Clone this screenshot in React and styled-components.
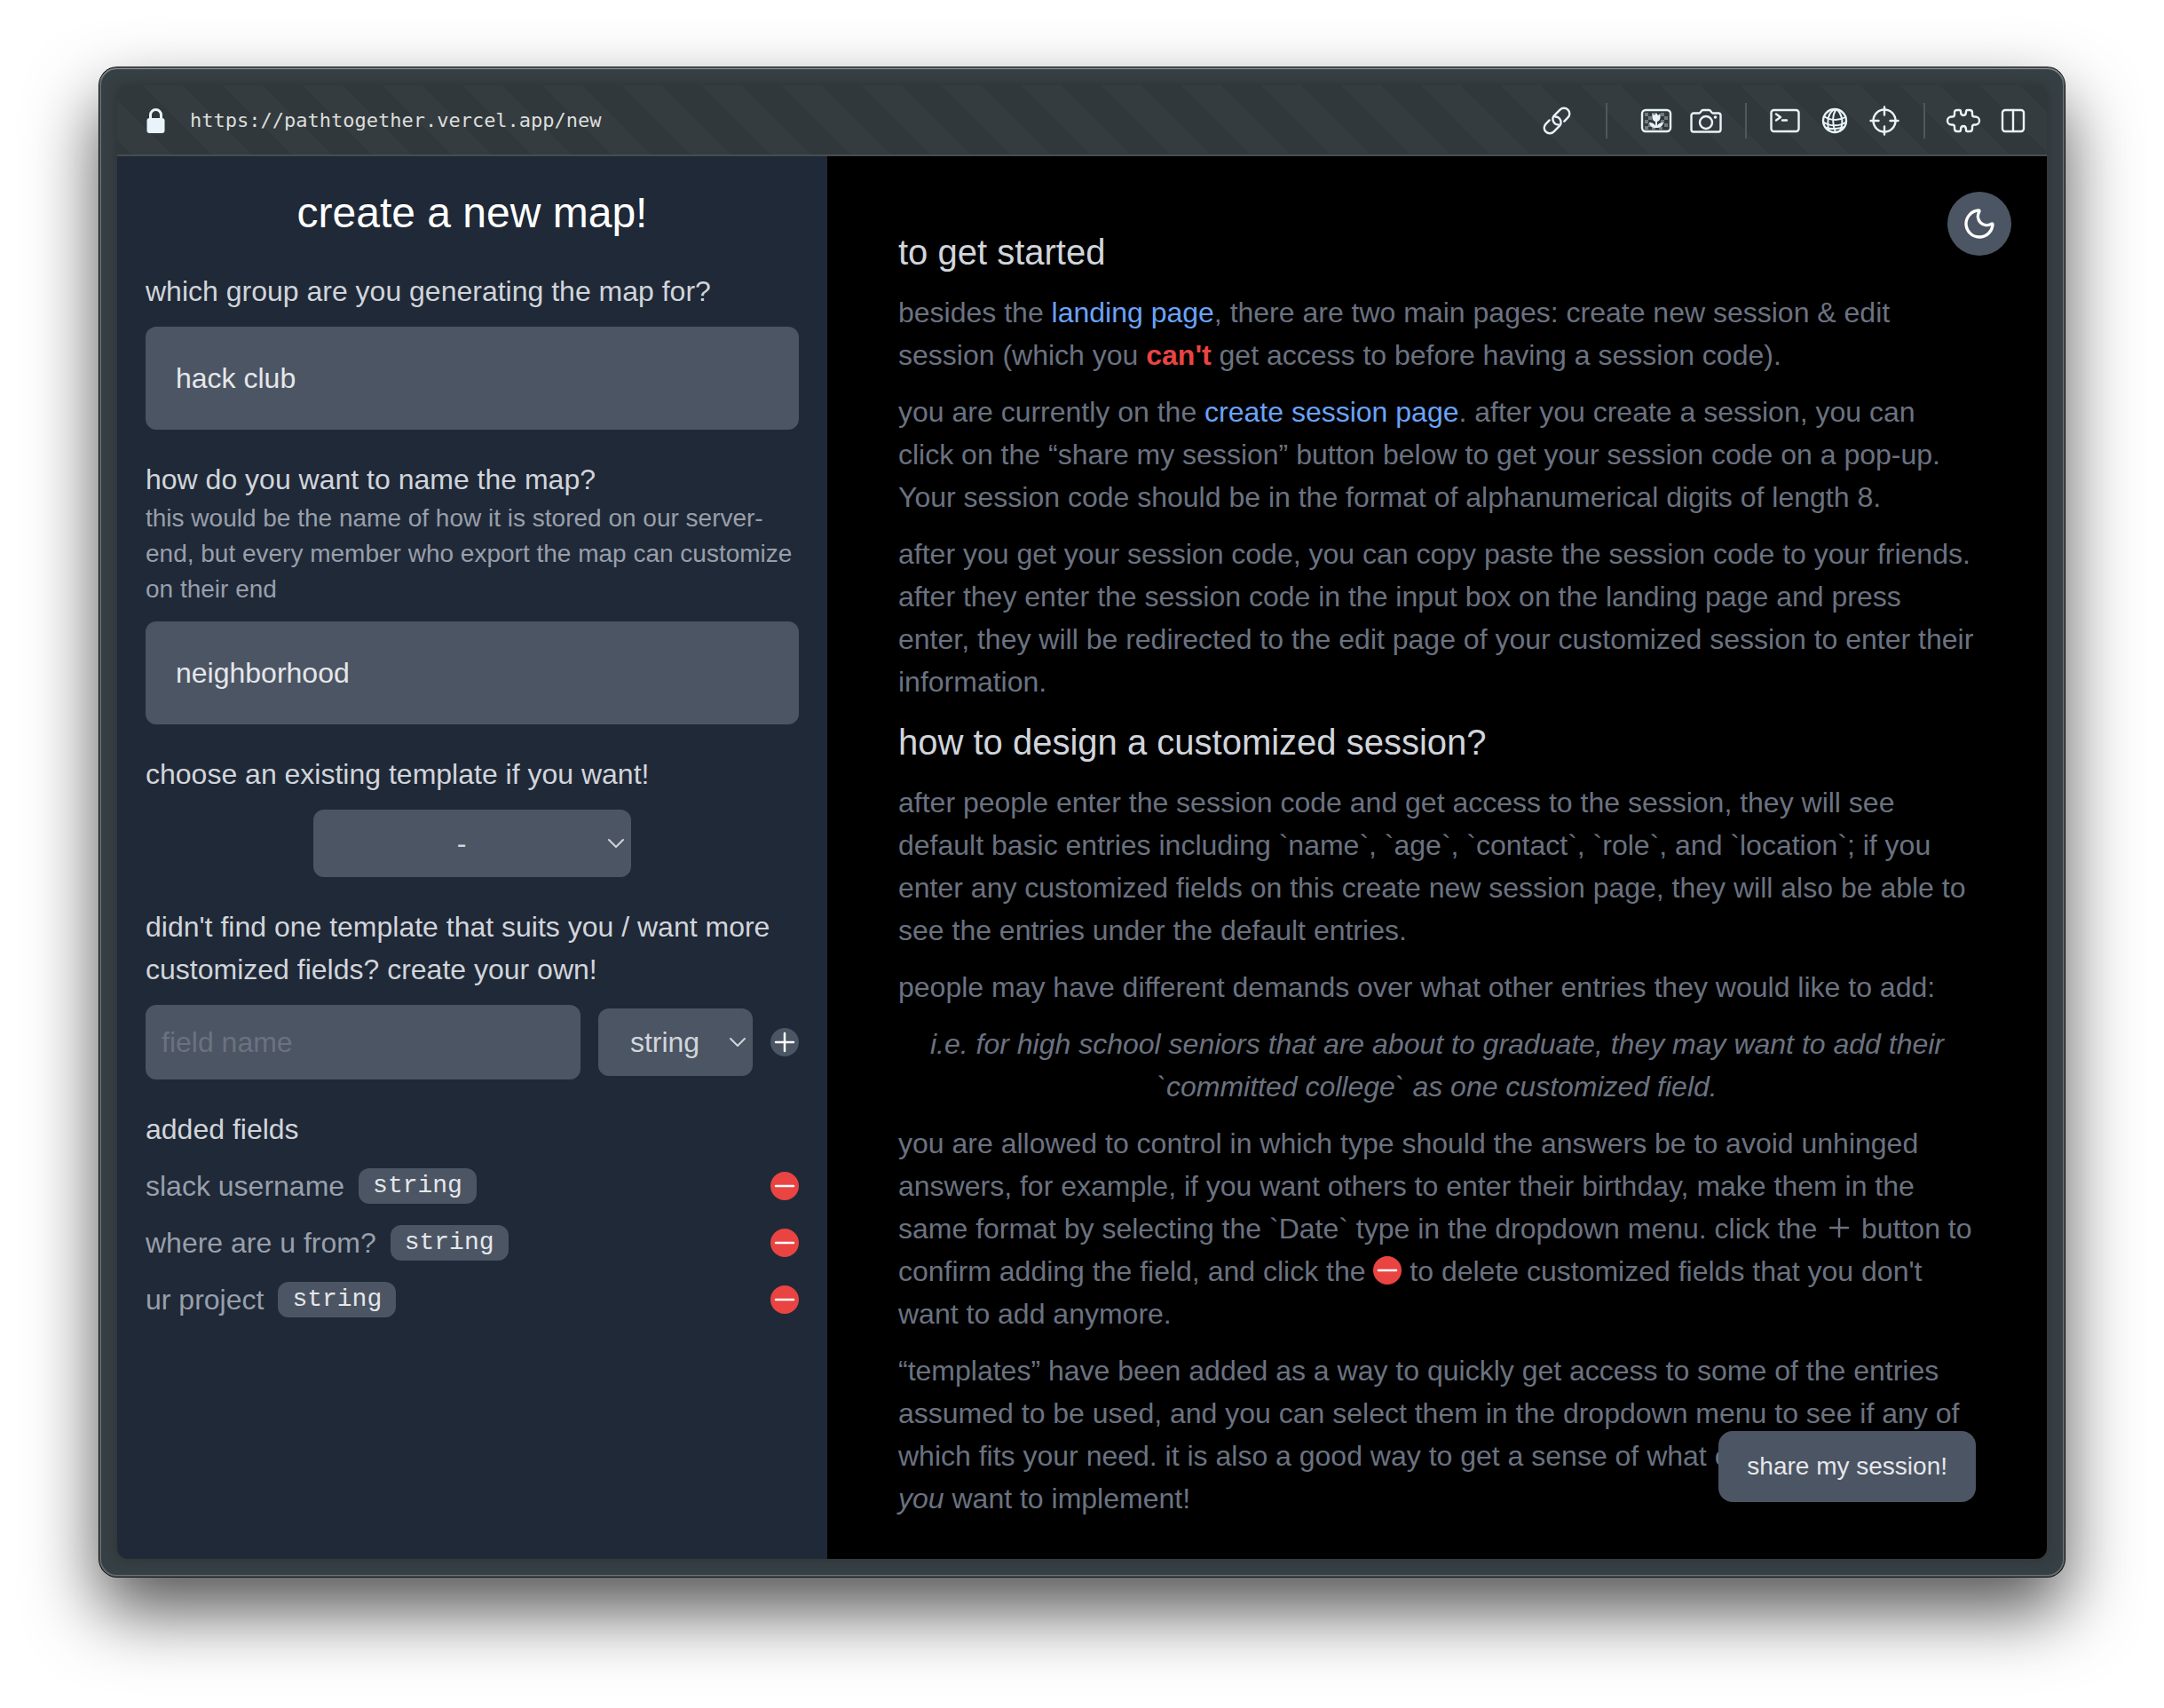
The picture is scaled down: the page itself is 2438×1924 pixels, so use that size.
import React from 'react';
import styled, { createGlobalStyle, css } from 'styled-components';
import { Moon } from 'lucide-react';

const GlobalStyle = createGlobalStyle`
  *, *::before, *::after { box-sizing: border-box; }
  body {
    margin: 0;
    background: #ffffff;
    font-family: 'Liberation Sans', Arial, sans-serif;
    font-size: 32px;
    line-height: 48px;
  }
  h1, h2, p, ul { margin: 0; padding: 0; font-weight: 400; }
  ul { list-style: none; }
  button, input, select { font: inherit; color: inherit; margin: 0; }
  button { border: 0; padding: 0; background: none; cursor: pointer; }
`;

const Page = styled.div`
  padding: 76px 112px 148px;
`;

const BrowserWindow = styled.div`
  padding: 20px;
  border-radius: 20px;
  background: #363f44;
  box-shadow:
    inset 0 2px 0 rgba(255, 255, 255, 0.16),
    inset 0 0 0 2px rgba(160, 176, 172, 0.4),
    0 0 0 1px #000000,
    0 38px 80px rgba(0, 0, 0, 0.68);
`;

const Viewport = styled.div`
  border-radius: 12px;
  overflow: hidden;
  box-shadow: 0 0 12px rgba(40, 44, 40, 0.6);
`;

const AddressBar = styled.header`
  display: flex;
  align-items: center;
  height: 80px;
  padding: 0 18px 0 32px;
  color: #e8f4fa;
  background-color: #31383b;
  background-image: linear-gradient(
    45deg,
    #353c3f 25%,
    transparent 25%,
    transparent 50%,
    #353c3f 50%,
    #353c3f 75%,
    transparent 75%
  );
  background-size: 90px 90px;
  background-position: 29px 0;
  box-shadow: inset 0 -2px 0 #454e50;
`;

const Address = styled.span`
  flex: 1;
  margin-left: 28px;
  font-family: 'DejaVu Sans Mono', 'Liberation Mono', monospace;
  font-size: 22px;
  line-height: 32px;
  color: #dcdede;
`;

const Tools = styled.div`
  display: flex;
  align-items: center;
  gap: 16px;
`;

const ToolButton = styled.button`
  display: flex;
  align-items: center;
  justify-content: center;
  width: 40px;
  height: 40px;
  color: inherit;
`;

const Separator = styled.span`
  width: 2px;
  height: 40px;
  margin: ${({ $wide }) => ($wide ? '0 19px' : '0 7px 0 8px')};
  background: #50585b;
`;

const Line = styled.svg`
  display: block;
  flex: none;
  fill: none;
  stroke: currentColor;
  stroke-width: ${({ $weight = 2.4 }) => $weight};
  stroke-linecap: round;
  stroke-linejoin: round;
`;

const Content = styled.div`
  display: grid;
  grid-template-columns: minmax(0, 800px) minmax(0, 1fr);
`;

const Sidebar = styled.form`
  display: flex;
  flex-direction: column;
  gap: 32px;
  padding: 32px;
  background: #202937;
  color: #d1d5db;
`;

const Title = styled.h1`
  font-size: 48px;
  line-height: 64px;
  text-align: center;
  color: #ffffff;
`;

const FieldGroup = styled.div`
  display: flex;
  flex-direction: column;
  gap: 16px;
`;

const Label = styled.label`
  display: block;
`;

const Hint = styled.p`
  font-size: 28px;
  line-height: 40px;
  color: #989fab;
`;

const surface = css`
  border: 2px solid #4c5563;
  border-radius: 12px;
  background: #4c5563;
`;

const TextInput = styled.input`
  ${surface}
  width: 100%;
  min-width: 0;
  padding: ${({ $compact }) => ($compact ? '16px' : '32px')};
  height: ${({ $compact }) => ($compact ? '84px' : '116px')};
  color: #e5e7eb;
  &::placeholder { color: #6b7280; opacity: 1; }
`;

const SelectBox = styled.div`
  display: grid;
  align-items: center;
  flex: none;
  width: ${({ $wide }) => ($wide ? '358px' : '174px')};
  align-self: center;
  color: #d1d5db;
  > * { grid-area: 1 / 1; }
  > svg { justify-self: end; margin-right: 7px; pointer-events: none; }
`;

const Select = styled.select`
  ${surface}
  appearance: none;
  width: 100%;
  height: 76px;
  padding: 0 56px 0 32px;
  text-align: center;
`;

const FieldRow = styled.div`
  display: flex;
  align-items: center;
  gap: 20px;
`;

const RoundButton = styled.button`
  flex: none;
  width: 32px;
  height: 32px;
  border-radius: 50%;
  color: #ffffff;
  background: ${({ $danger }) => ($danger ? '#e94442' : '#4c5563')};
`;

const AddedItem = styled.li`
  display: flex;
  align-items: center;
  gap: 16px;
  color: #989fab;
  ${RoundButton} { margin-left: auto; }
`;

const TypeBadge = styled.code`
  padding: 0 16px;
  border-radius: 12px;
  background: #4c5563;
  color: #e5e7eb;
  font-family: 'Liberation Mono', 'Courier New', monospace;
  font-size: 28px;
  line-height: 40px;
`;

const Guide = styled.main`
  position: relative;
  display: flex;
  flex-direction: column;
  gap: 16px;
  padding: 80px 80px 44px;
  background: #000000;
  color: #6b7280;
`;

const GuideHeading = styled.h2`
  font-size: 40px;
  line-height: 56px;
  color: #d1d5db;
`;

const Example = styled.p`
  font-style: italic;
  text-align: center;
`;

const GuideLink = styled.a`
  color: #6aa3f9;
  text-decoration: none;
`;

const Warning = styled.strong`
  color: #e94442;
`;

const InlineIcon = styled.span`
  display: inline-block;
  width: 32px;
  height: 32px;
  vertical-align: -4px;
  border-radius: 50%;
  color: ${({ $danger }) => ($danger ? '#ffffff' : 'inherit')};
  background: ${({ $danger }) => ($danger ? '#e94442' : 'none')};
`;

const ThemeToggle = styled.button`
  position: absolute;
  top: 40px;
  right: 40px;
  display: flex;
  align-items: center;
  justify-content: center;
  width: 72px;
  height: 72px;
  border-radius: 50%;
  background: #4c5563;
  color: #ffffff;
`;

const ShareButton = styled.button`
  position: absolute;
  right: 80px;
  bottom: 64px;
  padding: 20px 32px;
  border-radius: 16px;
  background: #4c5563;
  color: #e5e7eb;
  font-size: 28px;
  line-height: 40px;
`;

const LockIcon = () => (
  <svg width="22" height="30" viewBox="0 0 22 30" fill="none" aria-hidden="true">
    <rect x="1.500" y="12" width="20" height="17" rx="3" fill="currentColor" />
    <path d="M5.500 13V8.500a6 6 0 0 1 12 0V13" stroke="currentColor" strokeWidth="3" />
  </svg>
);

const LinkIcon = () => (
  <Line width="38" height="38" viewBox="-19 -19 38 38" aria-hidden="true">
    <g transform="rotate(-45)">
      <path d="M5.500 6.300H11.300A6.300 6.300 0 0 0 11.300 -6.300H2.500A6.300 6.300 0 0 0 -2 4.400" />
      <path d="M-5.500 -6.300H-11.300A6.300 6.300 0 0 0 -11.300 6.300H-2.500A6.300 6.300 0 0 0 2 -4.400" />
    </g>
  </Line>
);

const PictureIcon = () => (
  <Line width="36" height="28" viewBox="0 0 36 28" aria-hidden="true">
    <g stroke="none" fill="currentColor" opacity="0.35">
      <path d="M5 5h4v4H5zM13 5h4v4h-4zM23 5h4v4h-4zM9 9h4v4H9zM27 9h4v4h-4zM5 13h4v4H5zM23 13h4v4h-4zM9 17h4v4H9zM27 17h4v4h-4zM5 20h4v4H5zM13 21h4v3h-4zM21 21h4v3h-4z" />
    </g>
    <rect x="2" y="2" width="32" height="24" rx="4" />
    <g stroke="none" fill="currentColor">
      <path d="M13.500 6l2.500 2 2-3 2 3 2.500-2v4.500a4.500 4.500 0 0 1-9 0z" />
      <path d="M17 13h2v9h-2z" />
      <path d="M18 22c-5 0-7-2-8-6 4 0 7 2 8 6zM18 22c5 0 7-2 8-6-4 0-7 2-8 6z" />
    </g>
  </Line>
);

const CameraIcon = () => (
  <Line width="36" height="28" viewBox="0 0 36 28" aria-hidden="true">
    <path d="M4 5.500h6.500c1.500 0 2-3.500 4-3.500h7c2 0 2.500 3.500 4 3.500H32a2.500 2.500 0 0 1 2.500 2.500v16a2.500 2.500 0 0 1-2.500 2.500H4A2.500 2.500 0 0 1 1.500 24V8A2.500 2.500 0 0 1 4 5.500z" />
    <circle cx="18" cy="16" r="7" />
    <circle cx="28.500" cy="10" r="1.800" fill="currentColor" stroke="none" />
  </Line>
);

const TerminalIcon = () => (
  <Line width="34" height="28" viewBox="0 0 34 28" aria-hidden="true">
    <rect x="1.500" y="2" width="31" height="24" rx="3" />
    <path d="M7 6.500l5 3.500-5 3.500M14 13.500h5" />
  </Line>
);

const GlobeIcon = () => (
  <Line width="30" height="30" viewBox="0 0 30 30" aria-hidden="true">
    <circle cx="15" cy="15" r="13" />
    <g strokeWidth="2">
      <path d="M3 10c7 5 17 5 24 1M2 16.500c8 5 18 5 26 0M6 23c5 2 14 1 20-1" />
      <path d="M15 2C9 5 6 12 8 25M17 2c-5 6-5 17-1 26M18 2.500c6 7 7 15 3 24" />
    </g>
  </Line>
);

const CrosshairIcon = () => (
  <Line width="34" height="34" viewBox="0 0 34 34" aria-hidden="true">
    <circle cx="17" cy="17" r="12.500" />
    <path d="M17 1.500v9M17 23.500v9M1.500 17h9M23.500 17h9" />
  </Line>
);

const PuzzleIcon = () => (
  <Line width="40" height="28" viewBox="-1 -1 40 28" aria-hidden="true">
    <path d="M12 1h2.500q1.500 0 1.500 2q0 4 3 4q3 0 3-4q0-2 1.500-2h2.500q3 0 3 3v2q0 2.500 2.500 2.500h1a4.500 4.500 0 0 1 0 9h-1q-2.500 0-2.500 2.500v2q0 3-3 3h-2.500q-1.500 0-1.500-2q0-4-3-4q-3 0-3 4q0 2-1.500 2H12q-3 0-3-3v-2q0-2.500-2.500-2.500h-1a4.500 4.500 0 0 1 0-9h1q2.500 0 2.500-2.500V4q0-3 3-3z" />
  </Line>
);

const PanelsIcon = () => (
  <Line width="28" height="28" viewBox="0 0 28 28" aria-hidden="true">
    <rect x="2" y="2" width="24" height="24" rx="3" />
    <path d="M14 2v24" />
  </Line>
);

const ChevronIcon = () => (
  <Line $weight={2} width="20" height="12" viewBox="0 0 20 12" aria-hidden="true">
    <path d="M2 2l8 8 8-8" />
  </Line>
);

const PlusIcon = () => (
  <Line $weight={2.5} width="32" height="32" viewBox="0 0 32 32" aria-hidden="true">
    <path d="M16 6v20M6 16h20" />
  </Line>
);

const MinusIcon = () => (
  <Line $weight={2.5} width="32" height="32" viewBox="0 0 32 32" aria-hidden="true">
    <path d="M6 16h20" />
  </Line>
);

const addedFields = [
  { name: 'slack username', type: 'string' },
  { name: 'where are u from?', type: 'string' },
  { name: 'ur project', type: 'string' },
];

function Toolbar() {
  return (
    <AddressBar>
      <LockIcon />
      <Address>https://pathtogether.vercel.app/new</Address>
      <Tools>
        <ToolButton aria-label="Copy link"><LinkIcon /></ToolButton>
        <Separator $wide />
        <ToolButton aria-label="Images"><PictureIcon /></ToolButton>
        <ToolButton aria-label="Capture"><CameraIcon /></ToolButton>
        <Separator />
        <ToolButton aria-label="Console"><TerminalIcon /></ToolButton>
        <ToolButton aria-label="Network"><GlobeIcon /></ToolButton>
        <ToolButton aria-label="Inspect"><CrosshairIcon /></ToolButton>
        <Separator />
        <ToolButton aria-label="Extensions"><PuzzleIcon /></ToolButton>
        <ToolButton aria-label="Split view"><PanelsIcon /></ToolButton>
      </Tools>
    </AddressBar>
  );
}

function MapForm() {
  return (
    <Sidebar onSubmit={(event) => event.preventDefault()}>
      <Title>create a new map!</Title>

      <FieldGroup>
        <Label htmlFor="group">which group are you generating the map for?</Label>
        <TextInput id="group" type="text" defaultValue="hack club" />
      </FieldGroup>

      <FieldGroup>
        <div>
          <Label htmlFor="map-name">how do you want to name the map?</Label>
          <Hint id="map-name-hint">
            this would be the name of how it is stored on our server-end, but every member who
            export the map can customize on their end
          </Hint>
        </div>
        <TextInput
          id="map-name"
          type="text"
          defaultValue="neighborhood"
          aria-describedby="map-name-hint"
        />
      </FieldGroup>

      <FieldGroup>
        <Label htmlFor="template">choose an existing template if you want!</Label>
        <SelectBox $wide>
          <Select id="template"><option>-</option></Select>
          <ChevronIcon />
        </SelectBox>
      </FieldGroup>

      <FieldGroup>
        <Label htmlFor="field-name">
          didn't find one template that suits you / want more customized fields? create your own!
        </Label>
        <FieldRow>
          <TextInput $compact id="field-name" type="text" placeholder="field name" />
          <SelectBox>
            <Select aria-label="field type"><option>string</option></Select>
            <ChevronIcon />
          </SelectBox>
          <RoundButton type="button" aria-label="add field"><PlusIcon /></RoundButton>
        </FieldRow>
      </FieldGroup>

      <FieldGroup>
        <p>added fields</p>
        <FieldGroup as="ul">
          {addedFields.map((field) => (
            <AddedItem key={field.name}>
              {field.name}
              <TypeBadge>{field.type}</TypeBadge>
              <RoundButton $danger type="button" aria-label={`delete ${field.name}`}>
                <MinusIcon />
              </RoundButton>
            </AddedItem>
          ))}
        </FieldGroup>
      </FieldGroup>
    </Sidebar>
  );
}

function GuidePanel() {
  return (
    <Guide>
      <GuideHeading>to get started</GuideHeading>
      <p>
        besides the <GuideLink href="#landing">landing page</GuideLink>, there are two main pages:
        create new session &amp; edit session (which you <Warning>can't</Warning> get access to
        before having a session code).
      </p>
      <p>
        you are currently on the <GuideLink href="#new">create session page</GuideLink>. after you
        create a session, you can click on the “share my session” button below to get your session
        code on a pop-up. Your session code should be in the format of alphanumerical digits of
        length 8.
      </p>
      <p>
        after you get your session code, you can copy paste the session code to your friends. after
        they enter the session code in the input box on the landing page and press enter, they will
        be redirected to the edit page of your customized session to enter their information.
      </p>
      <GuideHeading>how to design a customized session?</GuideHeading>
      <p>
        after people enter the session code and get access to the session, they will see default
        basic entries including `name`, `age`, `contact`, `role`, and `location`; if you enter any
        customized fields on this create new session page, they will also be able to see the
        entries under the default entries.
      </p>
      <p>people may have different demands over what other entries they would like to add:</p>
      <Example>
        i.e. for high school seniors that are about to graduate, they may want to add their
        `committed college` as one customized field.
      </Example>
      <p>
        you are allowed to control in which type should the answers be to avoid unhinged answers,
        for example, if you want others to enter their birthday, make them in the same format by
        selecting the `Date` type in the dropdown menu. click the{' '}
        <InlineIcon><PlusIcon /></InlineIcon> button to confirm adding the field, and click the{' '}
        <InlineIcon $danger><MinusIcon /></InlineIcon> to delete customized fields that you don't
        want to add anymore.
      </p>
      <p>
        “templates” have been added as a way to quickly get access to some of the entries assumed to
        be used, and you can select them in the dropdown menu to see if any of which fits your need.
        it is also a good way to get a sense of what customized fields <em>you</em> want to
        implement!
      </p>
      <ThemeToggle type="button" aria-label="toggle dark mode"><Moon size={40} /></ThemeToggle>
      <ShareButton type="button">share my session!</ShareButton>
    </Guide>
  );
}

export default function App() {
  return (
    <>
      <GlobalStyle />
      <Page>
        <BrowserWindow>
          <Viewport>
            <Toolbar />
            <Content>
              <MapForm />
              <GuidePanel />
            </Content>
          </Viewport>
        </BrowserWindow>
      </Page>
    </>
  );
}
